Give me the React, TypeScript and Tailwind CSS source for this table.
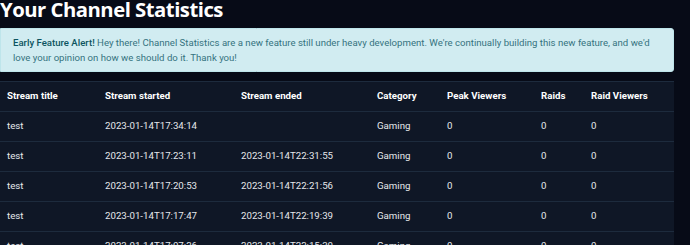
const rows = [
  { title: 'test', started: '2023-01-14T17:34:14', ended: '', category: 'Gaming', peak: 0, raids: 0, raidViewers: 0 },
  { title: 'test', started: '2023-01-14T17:23:11', ended: '2023-01-14T22:31:55', category: 'Gaming', peak: 0, raids: 0, raidViewers: 0 },
  { title: 'test', started: '2023-01-14T17:20:53', ended: '2023-01-14T22:21:56', category: 'Gaming', peak: 0, raids: 0, raidViewers: 0 },
  { title: 'test', started: '2023-01-14T17:17:47', ended: '2023-01-14T22:19:39', category: 'Gaming', peak: 0, raids: 0, raidViewers: 0 },
  { title: 'test', started: '2023-01-14T17:07:26', ended: '2023-01-14T22:15:30', category: 'Gaming', peak: 0, raids: 0, raidViewers: 0 },
];

const cols = ['w-[98px]', 'w-[136px]', 'w-[136px]', 'w-[70px]', 'w-[94px]', 'w-[50px]', 'w-[90px]'];

export default function App() {
  return (
    <div className="h-[245px] w-[690px] overflow-hidden bg-[#070b17] font-['Roboto',sans-serif]">
      <div className="w-[674px]">
        <h1 className="h-[28px] text-[20.3px] font-bold leading-[18px] tracking-[-0.5px] text-white font-['Open_Sans',sans-serif]">
          Your Channel Statistics
        </h1>

        <div className="h-[44px] rounded-r-[3px] border border-[#bee5eb] bg-[#d1ecf1] pl-[12px] pr-[10px] py-[6px] text-[9.6px] leading-[15px] text-[#35737f]">
          <span className="font-medium text-[#0c5460]">Early Feature Alert!</span> Hey there! Channel Statistics are a new
          feature still under heavy development. We're continually building this new feature, and we'd love your opinion
          on how we should do it. Thank you!
        </div>

        <table className="mt-[9px] w-full table-fixed border-collapse bg-[#0f1726] text-left text-[9.7px] text-[#e5e7eb]">
          <colgroup>
            {cols.map((c, i) => (
              <col key={i} className={c} />
            ))}
          </colgroup>
          <thead>
            <tr className="h-[30px] border-y border-[#1d2b3d]">
              {['Stream title', 'Stream started', 'Stream ended', 'Category', 'Peak Viewers', 'Raids', 'Raid Viewers'].map((h) => (
                <th key={h} className="px-[7px] font-bold text-white">
                  {h}
                </th>
              ))}
            </tr>
          </thead>
          <tbody>
            {rows.map((r, i) => (
              <tr key={i} className="h-[30px] border-b border-[#1d2b3d]">
                <td className="px-[7px]">{r.title}</td>
                <td className="px-[7px]">{r.started}</td>
                <td className="px-[7px]">{r.ended}</td>
                <td className="px-[7px]">{r.category}</td>
                <td className="px-[7px]">{r.peak}</td>
                <td className="px-[7px]">{r.raids}</td>
                <td className="px-[7px]">{r.raidViewers}</td>
              </tr>
            ))}
          </tbody>
        </table>
      </div>
    </div>
  );
}
